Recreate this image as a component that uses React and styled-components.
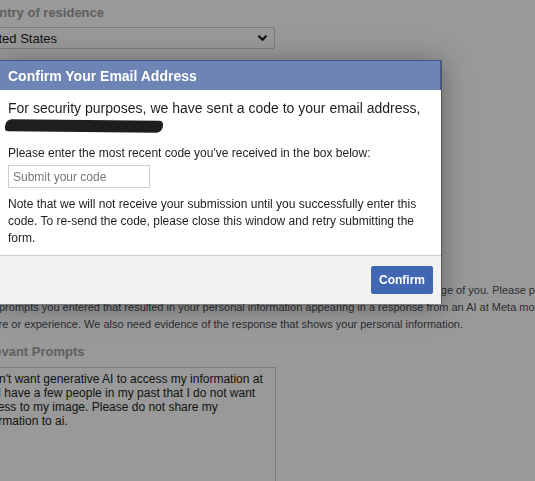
import React from "react";
import styled, { createGlobalStyle } from "styled-components";

const GlobalStyle = createGlobalStyle`
  html, body {
    margin: 0;
    padding: 0;
    background: #ffffff;
    overflow: hidden;
    font-family: "Liberation Sans", Arial, sans-serif;
  }
`;

const Page = styled.div`
  margin-left: -26px;
  padding-top: 5px;
  width: 760px;
  height: 481px;
  overflow: hidden;
`;

const Label = styled.div`
  font-size: 13px;
  font-weight: bold;
  color: #a0a0a0;
  height: 16px;
  margin-bottom: ${(p) => p.$gap ?? 6}px;
`;

const SelectBox = styled.div`
  display: flex;
  align-items: center;
  justify-content: space-between;
  width: 289px;
  height: 20px;
  padding: 0 6px 0 4px;
  border: 1px solid #cccccc;
  border-radius: 2px;
  font-size: 13px;
  color: #1c1e21;
`;

const Hidden = styled.div`
  height: 233px;
`;

const Paragraph = styled.div`
  font-size: 11px;
  line-height: 17px;
  color: #4b4f56;
  white-space: nowrap;
  margin-bottom: 11px;
`;

const Line = styled.div`
  padding-left: ${(p) => p.$indent || 0}px;
`;

const Textarea = styled.div`
  width: 292px;
  height: 140px;
  padding: 4px 4px;
  border: 1px solid #cccccc;
  font-size: 12px;
  line-height: 14px;
  color: #1c1e21;
`;

const Overlay = styled.div`
  position: fixed;
  inset: 0;
  background: rgba(0, 0, 0, 0.4);
`;

const Dialog = styled.div`
  position: fixed;
  top: 60px;
  left: -3px;
  width: 444px;
  background: #ffffff;
  border-right: 1px solid #555555;
  box-shadow: 0 2px 26px rgba(0, 0, 0, 0.35);
`;

const Header = styled.div`
  height: 29px;
  display: flex;
  align-items: center;
  padding-left: 11px;
  background: #6d84b4;
  border-top: 1px solid #3b5998;
  border-right: 1px solid #3b5998;
  color: #ffffff;
  font-size: 14px;
  font-weight: bold;
`;

const Body = styled.div`
  padding: 9px 11px 8px;
  color: #1c1e21;
`;

const Lead = styled.div`
  font-size: 14px;
  line-height: 18px;
`;

const Redacted = styled.div`
  width: 158px;
  height: 12px;
  margin: 3px 0 13px -3px;
  background: #1e1e1e;
  border-radius: 7px 4px 7px 3px;
  transform: rotate(0.6deg);
`;

const Text = styled.div`
  font-size: 12px;
  line-height: 17px;
`;

const CodeInput = styled.input`
  display: block;
  box-sizing: border-box;
  width: 142px;
  height: 23px;
  margin: 3px 0 8px;
  padding: 0 4px;
  border: 1px solid #cccccc;
  font-family: inherit;
  font-size: 12px;
  color: #1c1e21;
  &::placeholder {
    color: #777777;
  }
`;

const Footer = styled.div`
  display: flex;
  justify-content: flex-end;
  padding: 10px 8px 10px;
  background: #f2f2f2;
  border-top: 1px solid #cccccc;
`;

const Button = styled.button`
  height: 28px;
  padding: 0 7px;
  border: 1px solid #4267b2;
  border-radius: 2px;
  background: #4267b2;
  color: #ffffff;
  font-family: inherit;
  font-size: 12px;
  font-weight: bold;
`;

const Chevron = () => (
  <svg width="11" height="8" viewBox="0 0 11 8">
    <path d="M1.5 1.8 L5.5 5.8 L9.5 1.8" fill="none" stroke="#1c1e21" strokeWidth="2.2" />
  </svg>
);

export default function App() {
  return (
    <>
      <GlobalStyle />
      <Page>
        <Label>Country of residence</Label>
        <SelectBox>
          <span>United States</span>
          <Chevron />
        </SelectBox>
        <Hidden />
        <Paragraph>
          <Line $indent={84}>
            Please tell us about a response containing your personal information or an image of you. Please provide the
          </Line>
          <Line $indent={25}>
            prompts you entered that resulted in your personal information appearing in a response from an AI at Meta model,
          </Line>
          <Line>
            feature or experience. We also need evidence of the response that shows your personal information.
          </Line>
        </Paragraph>
        <Label $gap={7}>Relevant Prompts</Label>
        <Textarea>
          I don't want generative AI to access my information at
          <br />
          all. I have a few people in my past that I do not want
          <br />
          access to my image. Please do not share my
          <br />
          information to ai.
        </Textarea>
      </Page>
      <Overlay />
      <Dialog>
        <Header>Confirm Your Email Address</Header>
        <Body>
          <Lead>For security purposes, we have sent a code to your email address,</Lead>
          <Redacted />
          <Text>Please enter the most recent code you've received in the box below:</Text>
          <CodeInput placeholder="Submit your code" />
          <Text>
            Note that we will not receive your submission until you successfully enter this code. To re-send the
            code, please close this window and retry submitting the form.
          </Text>
        </Body>
        <Footer>
          <Button>Confirm</Button>
        </Footer>
      </Dialog>
    </>
  );
}
